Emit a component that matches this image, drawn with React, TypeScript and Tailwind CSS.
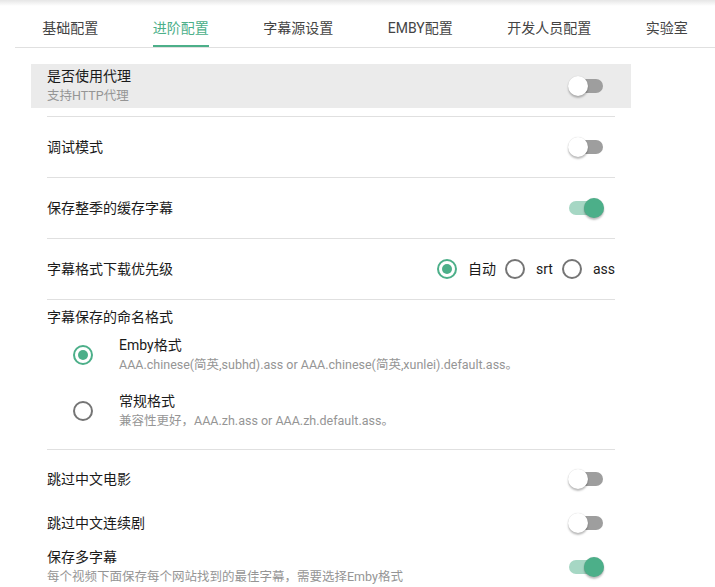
import { useState } from 'react';

const tabs = ['基础配置', '进阶配置', '字幕源设置', 'EMBY配置', '开发人员配置', '实验室'];

function Switch({ on }: { on: boolean }) {
  return (
    <div className="relative w-[37px] h-[20px] shrink-0">
      <div
        className={`absolute left-[1px] top-[3px] w-[34px] h-[14px] rounded-full ${
          on ? 'bg-[#a6d7c4]' : 'bg-[#9e9e9e]'
        }`}
      />
      <div
        className={`absolute top-0 w-5 h-5 rounded-full shadow-[0_2px_2px_rgba(0,0,0,0.25),0_0_1px_rgba(0,0,0,0.2)] ${
          on ? 'left-[16px] bg-[#4caf89]' : 'left-0 bg-white'
        }`}
      />
    </div>
  );
}

function Radio({ checked }: { checked: boolean }) {
  return (
    <div
      className={`w-5 h-5 rounded-full border-2 flex items-center justify-center shrink-0 ${
        checked ? 'border-[#4caf89]' : 'border-[#757575]'
      }`}
    >
      {checked && <div className="w-[10px] h-[10px] rounded-full bg-[#4caf89]" />}
    </div>
  );
}

function Row({
  title,
  sub,
  on,
  hover,
}: {
  title: string;
  sub?: string;
  on: boolean;
  hover?: boolean;
}) {
  return (
    <div
      className={`h-[44px] flex items-center justify-between pl-4 pr-[26px] ${
        hover ? 'bg-[#ebebeb]' : ''
      }`}
    >
      <div className="flex flex-col">
        <span className="text-[14px] leading-5 text-[#1a1a1a]">{title}</span>
        {sub && <span className="text-[12.5px] leading-5 text-[#959595]">{sub}</span>}
      </div>
      <Switch on={on} />
    </div>
  );
}

const Divider = () => <div className="h-px bg-[#e0e0e0] mx-4 my-2" />;

export default function App() {
  const [active, setActive] = useState(1);
  const [fmt, setFmt] = useState('auto');
  const [naming, setNaming] = useState('emby');

  return (
    <div
      className="w-[715px] h-[587px] overflow-hidden bg-white"
      style={{ fontFamily: "Roboto, 'Noto Sans CJK SC', sans-serif" }}
    >
      <div className="h-[6px] bg-gradient-to-b from-[#e6e6e6] to-white -mb-[6px]" />

      {/* Tabs */}
      <div className="flex ml-[15px] border-b border-[#e0e0e0]">
        {tabs.map((t, i) => (
          <button
            key={t}
            onClick={() => setActive(i)}
            className="flex-auto flex justify-center pt-[18px] px-0"
          >
            <span
              className={`text-[14px] leading-5 pb-[7px] border-b-2 whitespace-nowrap ${
                active === i
                  ? 'text-[#4caf89] border-[#4caf89]'
                  : 'text-[#444] border-transparent'
              }`}
            >
              {t}
            </span>
          </button>
        ))}
      </div>

      {/* Settings list */}
      <div className="ml-[31px] w-[600px] pt-4">
        <Row title="是否使用代理" sub="支持HTTP代理" on={false} hover />
        <Divider />
        <Row title="调试模式" on={false} />
        <Divider />
        <Row title="保存整季的缓存字幕" on={true} />
        <Divider />
        <div className="h-[44px] flex items-center justify-between px-4">
          <span className="text-[14px] leading-5 text-[#1a1a1a]">字幕格式下载优先级</span>
          <div className="flex items-center text-[14px] text-[#1a1a1a]">
            {[
              ['auto', '自动'],
              ['srt', 'srt'],
              ['ass', 'ass'],
            ].map(([k, label], i) => (
              <label
                key={k}
                onClick={() => setFmt(k)}
                className={`flex items-center gap-[11px] cursor-pointer ${i > 0 ? 'ml-[9px]' : ''}`}
              >
                <Radio checked={fmt === k} />
                <span>{label}</span>
              </label>
            ))}
          </div>
        </div>
        <Divider />

        <div className="px-4">
          <div className="text-[14px] leading-5 text-[#1a1a1a] -mt-px">字幕保存的命名格式</div>
          {[
            ['emby', 'Emby格式', 'AAA.chinese(简英,subhd).ass or AAA.chinese(简英,xunlei).default.ass。'],
            ['normal', '常规格式', '兼容性更好，AAA.zh.ass or AAA.zh.default.ass。'],
          ].map(([k, title, desc]) => (
            <div
              key={k}
              onClick={() => setNaming(k)}
              className="h-[56px] flex items-center pl-[26px] cursor-pointer"
            >
              <Radio checked={naming === k} />
              <div className="ml-[26px] flex flex-col">
                <span className="text-[14px] leading-5 text-[#1a1a1a]">{title}</span>
                <span className="text-[12.5px] leading-5 text-[#959595]">{desc}</span>
              </div>
            </div>
          ))}
        </div>
        <div className="h-px bg-[#e0e0e0] mx-4 mt-[10px] mb-[7px]" />

        <Row title="跳过中文电影" on={false} />
        <Row title="跳过中文连续剧" on={false} />
        <Row title="保存多字幕" sub="每个视频下面保存每个网站找到的最佳字幕，需要选择Emby格式" on={true} />
      </div>
    </div>
  );
}
